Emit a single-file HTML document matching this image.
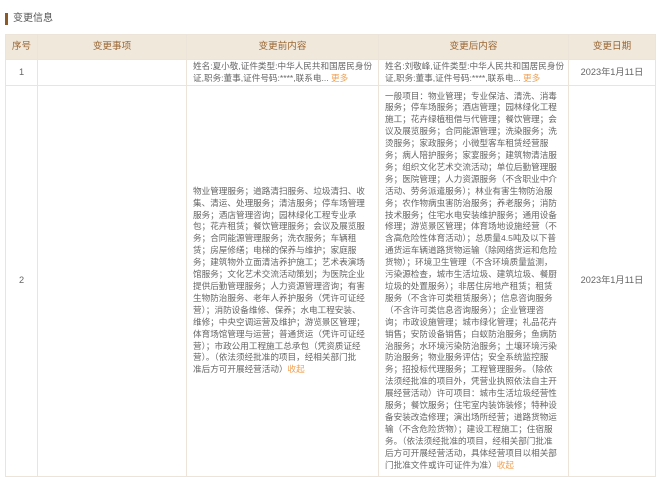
<!DOCTYPE html>
<html><head><meta charset="utf-8"><style>
html,body{margin:0;padding:0;background:#fff;width:660px;height:476px;overflow:hidden}
body{font-family:"Liberation Sans","Noto Sans CJK SC",sans-serif;color:#666}
.title{position:absolute;left:5px;top:13px;font-size:10px;color:#555;line-height:12px;padding-left:5px;border-left:3px solid #8a5a2b}
table{position:absolute;left:5px;top:34px;border-collapse:collapse;width:650px;table-layout:fixed}
td,th{border:1px solid #ece4d8;text-align:center;vertical-align:middle;font-size:9.2px;line-height:11.9px;padding:0}
th{background:#f1e8dc;color:#9a6835;font-weight:normal;height:24px;font-size:9.6px}
td.t{text-align:left;padding:0 6px;white-space:nowrap;font-size:8.6px;letter-spacing:0}
.m{color:#f0a050}
tr.r1 td{height:25px}
tr.r2 td{height:390px}
</style></head><body>
<div class="title">变更信息</div>
<table>
<colgroup><col style="width:32px"><col style="width:149px"><col style="width:192px"><col style="width:190px"><col style="width:87px"></colgroup>
<tr><th>序号</th><th>变更事项</th><th>变更前内容</th><th>变更后内容</th><th>变更日期</th></tr>
<tr class="r1"><td>1</td><td></td><td class="t">姓名:夏小敬,证件类型:中华人民共和国居民身份<br>证,职务:董事,证件号码:****,联系电... <span class="m">更多</span></td><td class="t">姓名:刘敬峰,证件类型:中华人民共和国居民身份<br>证,职务:董事,证件号码:****,联系电... <span class="m">更多</span></td><td>2023年1月11日</td></tr>
<tr class="r2"><td>2</td><td></td><td class="t">物业管理服务；道路清扫服务、垃圾清扫、收<br>集、清运、处理服务；清洁服务；停车场管理<br>服务；酒店管理咨询；园林绿化工程专业承<br>包；花卉租赁；餐饮管理服务；会议及展览服<br>务；合同能源管理服务；洗衣服务；车辆租<br>赁；房屋修缮；电梯的保养与维护；家庭服<br>务；建筑物外立面清洁养护施工；艺术表演场<br>馆服务；文化艺术交流活动策划；为医院企业<br>提供后勤管理服务；人力资源管理咨询；有害<br>生物防治服务、老年人养护服务（凭许可证经<br>营）；消防设备维修、保养；水电工程安装、<br>维修；中央空调运营及维护；游览景区管理；<br>体育场馆管理与运营；普通货运（凭许可证经<br>营）；市政公用工程施工总承包（凭资质证经<br>营）。（依法须经批准的项目，经相关部门批<br>准后方可开展经营活动）<span class="m">收起</span></td><td class="t">一般项目：物业管理；专业保洁、清洗、消毒<br>服务；停车场服务；酒店管理；园林绿化工程<br>施工；花卉绿植租借与代管理；餐饮管理；会<br>议及展览服务；合同能源管理；洗染服务；洗<br>烫服务；家政服务；小微型客车租赁经营服<br>务；病人陪护服务；家宴服务；建筑物清洁服<br>务；组织文化艺术交流活动；单位后勤管理服<br>务；医院管理；人力资源服务（不含职业中介<br>活动、劳务派遣服务）；林业有害生物防治服<br>务；农作物病虫害防治服务；养老服务；消防<br>技术服务；住宅水电安装维护服务；通用设备<br>修理；游览景区管理；体育场地设施经营（不<br>含高危险性体育活动）；总质量4.5吨及以下普<br>通货运车辆道路货物运输（除网络货运和危险<br>货物）；环境卫生管理（不含环境质量监测，<br>污染源检查，城市生活垃圾、建筑垃圾、餐厨<br>垃圾的处置服务）；非居住房地产租赁；租赁<br>服务（不含许可类租赁服务）；信息咨询服务<br>（不含许可类信息咨询服务）；企业管理咨<br>询；市政设施管理；城市绿化管理；礼品花卉<br>销售；安防设备销售；白蚁防治服务；鱼病防<br>治服务；水环境污染防治服务；土壤环境污染<br>防治服务；物业服务评估；安全系统监控服<br>务；招投标代理服务；工程管理服务。（除依<br>法须经批准的项目外，凭营业执照依法自主开<br>展经营活动）许可项目：城市生活垃圾经营性<br>服务；餐饮服务；住宅室内装饰装修；特种设<br>备安装改造修理；演出场所经营；道路货物运<br>输（不含危险货物）；建设工程施工；住宿服<br>务。（依法须经批准的项目，经相关部门批准<br>后方可开展经营活动，具体经营项目以相关部<br>门批准文件或许可证件为准）<span class="m">收起</span></td><td>2023年1月11日</td></tr>
</table>
</body></html>
